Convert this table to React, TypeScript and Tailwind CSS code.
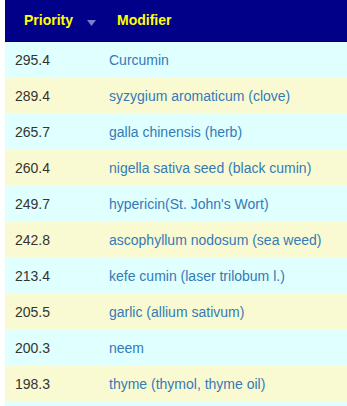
import React from "react";

const rows: [string, string][] = [
  ["295.4", "Curcumin"],
  ["289.4", "syzygium aromaticum (clove)"],
  ["265.7", "galla chinensis (herb)"],
  ["260.4", "nigella sativa seed (black cumin)"],
  ["249.7", "hypericin(St. John's Wort)"],
  ["242.8", "ascophyllum nodosum (sea weed)"],
  ["213.4", "kefe cumin (laser trilobum l.)"],
  ["205.5", "garlic (allium sativum)"],
  ["200.3", "neem"],
  ["198.3", "thyme (thymol, thyme oil)"],
];

export default function App() {
  return (
    <div className="w-[347px] h-[406px] overflow-hidden bg-white pl-[5px]" style={{ fontFamily: '"Liberation Sans", Arial, sans-serif' }}>
      <div className="w-[342px]">
        <div className="grid grid-cols-[94px_1fr] h-[42px] bg-[#000088] border-b border-black items-center text-[14px] font-bold text-[#ffff00]">
          <div className="pl-[19px] flex items-center">
            <span>Priority</span>
            <svg width="9" height="6" viewBox="0 0 9 6" className="ml-[14px] mt-[4px]">
              <polygon points="0,0 9,0 4.5,6" fill="#7b7bd0" />
            </svg>
          </div>
          <div className="pl-[18px]">Modifier</div>
        </div>
        {rows.map(([p, m], i) => (
          <div
            key={i}
            className={`grid grid-cols-[94px_1fr] h-[36px] items-center text-[14px] ${i % 2 === 0 ? "bg-[#e0ffff]" : "bg-[#fafad2]"}`}
          >
            <div className="pl-[10px] text-[#333333]">{p}</div>
            <div className="pl-[10px] text-[#337ab7]">{m}</div>
          </div>
        ))}
        <div className="h-[36px] bg-[#e0ffff]" />
      </div>
    </div>
  );
}
